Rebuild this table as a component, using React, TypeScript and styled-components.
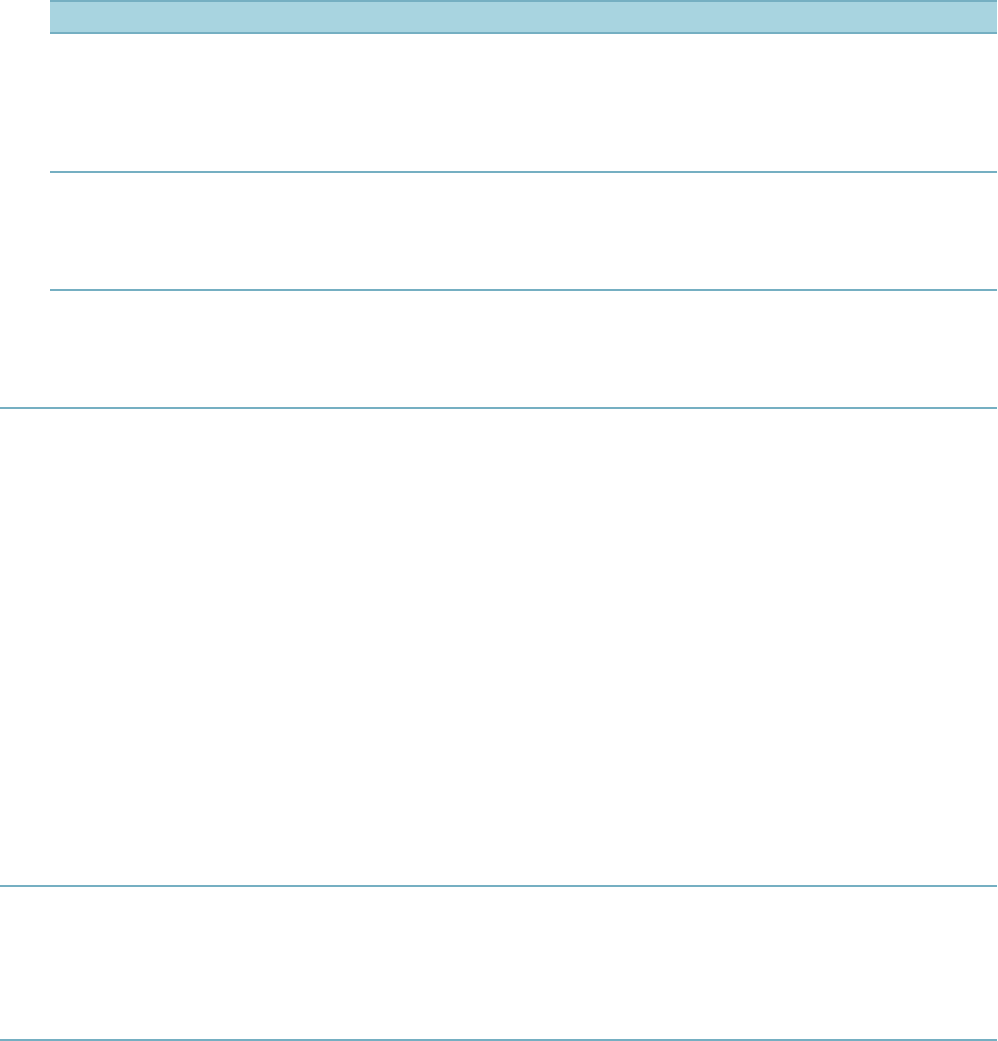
import React from "react";
import styled, { createGlobalStyle } from "styled-components";

const GlobalStyle = createGlobalStyle`
  html, body {
    margin: 0;
    padding: 0;
    background: #ffffff;
    font-family: "Liberation Sans", Arial, sans-serif;
  }
`;

const Page = styled.div`
  width: 997px;
  display: flex;
  flex-direction: column;
`;

const Section = styled.section<{ $height: number }>`
  height: ${(p) => p.$height}px;
  border-bottom: 2px solid #75afc2;
  display: flex;
  flex-direction: column;
`;

const Table = styled.div`
  margin-left: 50px;
  display: flex;
  flex-direction: column;
`;

const HeaderRow = styled.div`
  height: 30px;
  background: #a8d4e0;
  border-top: 2px solid #75afc2;
  border-bottom: 2px solid #75afc2;
`;

const Row = styled.div<{ $height: number; $last?: boolean }>`
  height: ${(p) => p.$height}px;
  border-bottom: ${(p) => (p.$last ? "none" : "2px solid #75afc2")};
`;

export default function App() {
  return (
    <>
      <GlobalStyle />
      <Page>
        <Section $height={407}>
          <Table>
            <HeaderRow />
            <Row $height={137} />
            <Row $height={116} />
            <Row $height={116} $last />
          </Table>
        </Section>
        <Section $height={476} />
        <Section $height={152} />
      </Page>
    </>
  );
}
